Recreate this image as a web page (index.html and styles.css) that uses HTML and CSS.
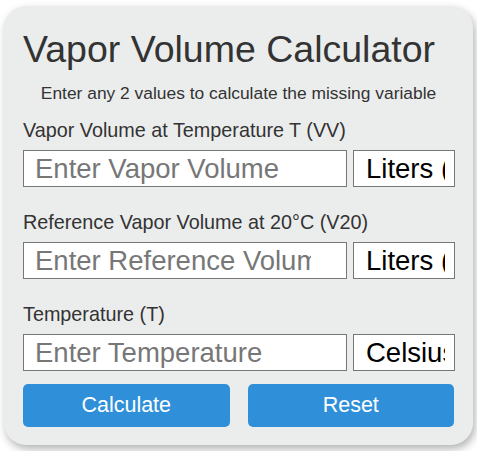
FILE: index.html
```html
<!DOCTYPE html>
<html lang="en">
<head>
    <meta charset="UTF-8">
    <meta name="viewport" content="width=device-width, initial-scale=1.0">
    <title>Vapor Volume Calculator</title>
    <link rel="stylesheet" href="styles.css">
</head>
<body>
    <div class="calculator">
        <h1 class="title">Vapor Volume Calculator</h1>
        <p class="subtitle">Enter any 2 values to calculate the missing variable</p>

        <div class="field">
            <label for="vv">Vapor Volume at Temperature T (VV)</label>
            <div class="row">
                <input type="number" id="vv" placeholder="Enter Vapor Volume">
                <select id="vvUnit">
                    <option>Liters (L)</option>
                    <option>Cubic Meters (m³)</option>
                    <option>Gallons (gal)</option>
                </select>
            </div>
        </div>

        <div class="field">
            <label for="v20">Reference Vapor Volume at 20°C (V20)</label>
            <div class="row">
                <input type="number" id="v20" placeholder="Enter Reference Volume">
                <select id="v20Unit">
                    <option>Liters (L)</option>
                    <option>Cubic Meters (m³)</option>
                    <option>Gallons (gal)</option>
                </select>
            </div>
        </div>

        <div class="field">
            <label for="temp">Temperature (T)</label>
            <div class="row">
                <input type="number" id="temp" placeholder="Enter Temperature">
                <select id="tempUnit">
                    <option>Celsius (°C)</option>
                    <option>Fahrenheit (°F)</option>
                    <option>Kelvin (K)</option>
                </select>
            </div>
        </div>

        <div class="buttons">
            <button type="button">Calculate</button>
            <button type="button">Reset</button>
        </div>
    </div>
</body>
</html>
```

FILE: styles.css
```css
body {
    margin: 0;
    padding: 6px 4px;
    background: #fff;
    font-family: "Liberation Sans", Arial, sans-serif;
    color: #333;
}
.calculator {
    width: 469px;
    box-sizing: border-box;
    background: #ebeded;
    border-radius: 22px;
    padding: 22px 19px 18px;
    box-shadow: 2px 4px 8px rgba(0, 0, 0, 0.3);
}
.title {
    margin: 0;
    font-size: 37.5px;
    font-weight: normal;
    line-height: 42px;
}
.subtitle {
    margin: 13px 0 0;
    font-size: 17.4px;
    line-height: 20px;
    text-align: center;
}
.field {
    margin-top: 16px;
}
.field + .field {
    margin-top: 24px;
}
.field label {
    display: block;
    font-size: 19.8px;
    line-height: 22px;
}
.row {
    display: flex;
    gap: 6px;
    margin-top: 9px;
}
.row input,
.row select {
    height: 37px;
    box-sizing: border-box;
    border: 1px solid #777;
    background: #fff;
    font-family: inherit;
    font-size: 27.5px;
    border-radius: 0;
}
.row input {
    width: 324px;
    padding: 0 20px 0 11px;
}
.row input::placeholder {
    color: #777;
}
.row select {
    width: 102px;
    padding: 0 9px 0 12px;
    color: #000;
    appearance: none;
    -webkit-appearance: none;
}
.buttons {
    display: flex;
    gap: 18px;
    margin-top: 13px;
}
.buttons button {
    flex: 1;
    height: 43px;
    border: none;
    border-radius: 5px;
    background: #2f90d9;
    color: #fff;
    font-family: inherit;
    font-size: 21.5px;
    cursor: pointer;
}
```
